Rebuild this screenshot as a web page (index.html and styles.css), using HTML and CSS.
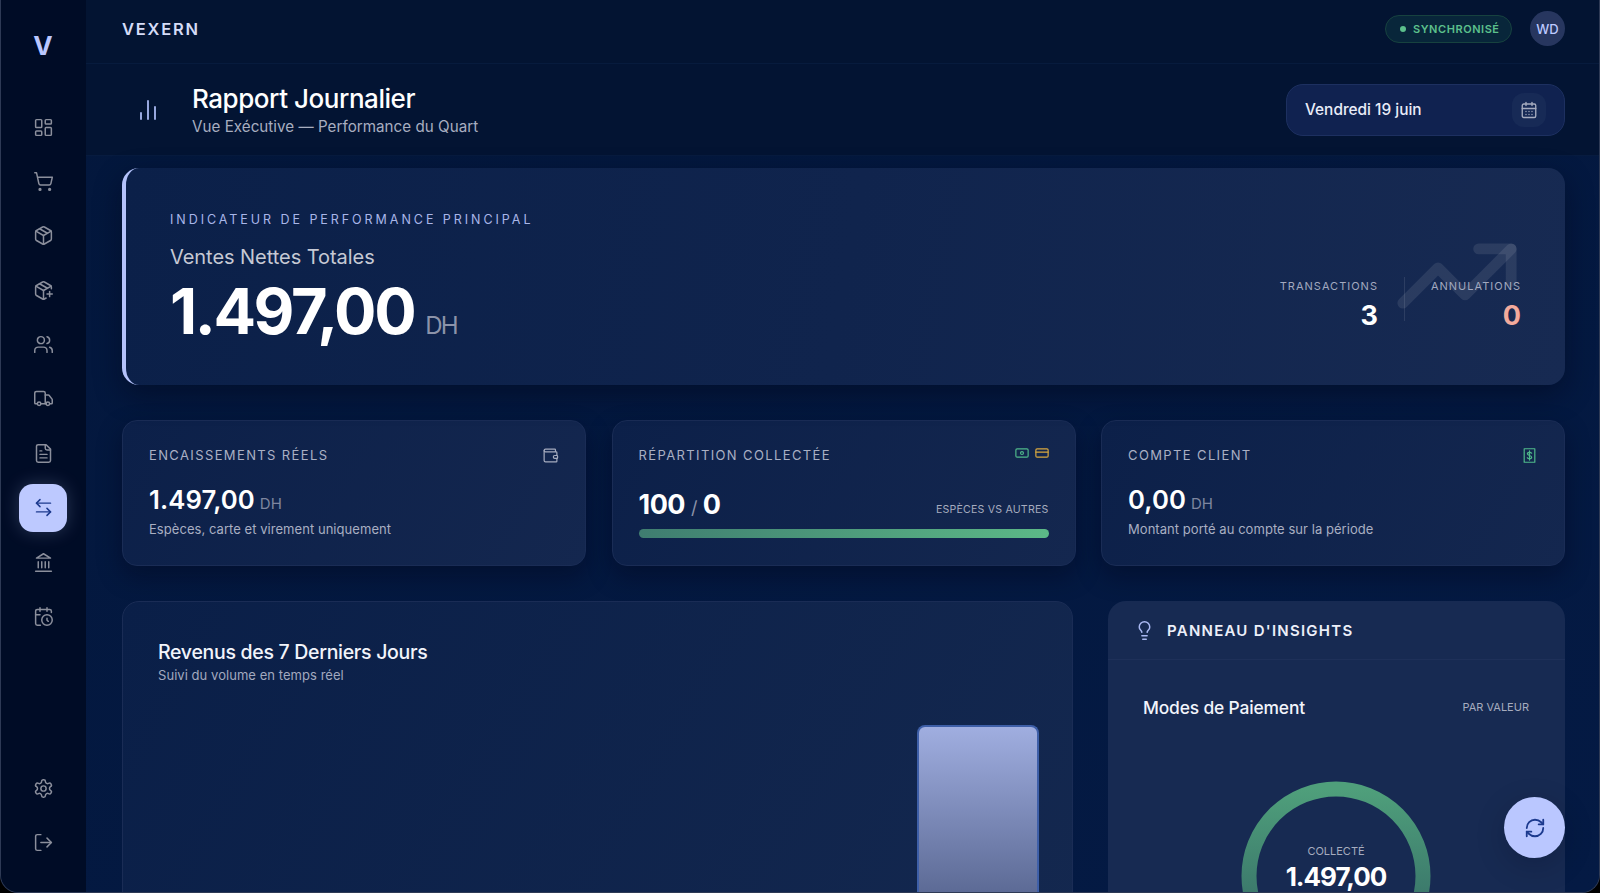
FILE: index.html
```html
<!DOCTYPE html>
<html lang="fr">
<head>
<meta charset="utf-8">
<title>Vexern — Rapport Journalier</title>
<link rel="stylesheet" href="styles.css">
</head>
<body>
<div class="app">
  <aside class="sidebar">
    <div class="logo">V</div>
    <nav class="nav">
      <a class="nav-item"><svg class="ic" viewBox="0 0 24 24"><rect x="3" y="3" width="7" height="9" rx="1"/><rect x="14" y="3" width="7" height="5" rx="1"/><rect x="14" y="12" width="7" height="9" rx="1"/><rect x="3" y="16" width="7" height="5" rx="1"/></svg></a>
      <a class="nav-item"><svg class="ic" viewBox="0 0 24 24"><circle cx="8" cy="21" r="1"/><circle cx="19" cy="21" r="1"/><path d="M2.05 2.05h2l2.66 12.42a2 2 0 0 0 2 1.58h9.78a2 2 0 0 0 1.95-1.57l1.65-7.43H5.12"/></svg></a>
      <a class="nav-item"><svg class="ic" viewBox="0 0 24 24"><path d="M11 21.73a2 2 0 0 0 2 0l7-4A2 2 0 0 0 21 16V8a2 2 0 0 0-1-1.73l-7-4a2 2 0 0 0-2 0l-7 4A2 2 0 0 0 3 8v8a2 2 0 0 0 1 1.73z"/><path d="M12 22V12"/><path d="M3.29 7 12 12l8.71-5"/><path d="m7.5 4.27 9 5.15"/></svg></a>
      <a class="nav-item"><svg class="ic" viewBox="0 0 24 24"><path d="M16 16h6"/><path d="M19 13v6"/><path d="M21 10V8a2 2 0 0 0-1-1.73l-7-4a2 2 0 0 0-2 0l-7 4A2 2 0 0 0 3 8v8a2 2 0 0 0 1 1.73l7 4a2 2 0 0 0 2 0l2-1.14"/><path d="m7.5 4.27 9 5.15"/><path d="M3.29 7 12 12l8.71-5"/><path d="M12 22V12"/></svg></a>
      <a class="nav-item"><svg class="ic" viewBox="0 0 24 24"><path d="M16 21v-2a4 4 0 0 0-4-4H6a4 4 0 0 0-4 4v2"/><circle cx="9" cy="7" r="4"/><path d="M22 21v-2a4 4 0 0 0-3-3.87"/><path d="M16 3.13a4 4 0 0 1 0 7.75"/></svg></a>
      <a class="nav-item"><svg class="ic" viewBox="0 0 24 24"><path d="M14 18V6a2 2 0 0 0-2-2H4a2 2 0 0 0-2 2v11a1 1 0 0 0 1 1h2"/><path d="M15 18H9"/><path d="M19 18h2a1 1 0 0 0 1-1v-3.65a1 1 0 0 0-.22-.624l-3.48-4.35A1 1 0 0 0 17.52 8H14"/><circle cx="17" cy="18" r="2"/><circle cx="7" cy="18" r="2"/></svg></a>
      <a class="nav-item"><svg class="ic" viewBox="0 0 24 24"><path d="M15 2H6a2 2 0 0 0-2 2v16a2 2 0 0 0 2 2h12a2 2 0 0 0 2-2V7Z"/><path d="M14 2v4a2 2 0 0 0 2 2h4"/><path d="M10 9H8"/><path d="M16 13H8"/><path d="M16 17H8"/></svg></a>
      <a class="nav-item active"><svg class="ic" viewBox="0 0 24 24"><path d="M8 3 4 7l4 4"/><path d="M4 7h16"/><path d="m16 21 4-4-4-4"/><path d="M20 17H4"/></svg></a>
      <a class="nav-item"><svg class="ic" viewBox="0 0 24 24"><path d="M3 22h18"/><path d="M6 18v-7"/><path d="M10 18v-7"/><path d="M14 18v-7"/><path d="M18 18v-7"/><path d="M12 2l8 5H4z"/></svg></a>
      <a class="nav-item"><svg class="ic" viewBox="0 0 24 24"><path d="M21 7.5V6a2 2 0 0 0-2-2H5a2 2 0 0 0-2 2v14a2 2 0 0 0 2 2h3.5"/><path d="M16 2v4"/><path d="M8 2v4"/><path d="M3 10h5"/><path d="M17.5 17.5 16 16.3V14"/><circle cx="16" cy="16" r="6"/></svg></a>
    </nav>
    <nav class="nav nav-bottom">
      <a class="nav-item"><svg class="ic" viewBox="0 0 24 24"><path d="M12.22 2h-.44a2 2 0 0 0-2 2v.18a2 2 0 0 1-1 1.73l-.43.25a2 2 0 0 1-2 0l-.15-.08a2 2 0 0 0-2.73.73l-.22.38a2 2 0 0 0 .73 2.73l.15.1a2 2 0 0 1 1 1.72v.51a2 2 0 0 1-1 1.74l-.15.09a2 2 0 0 0-.73 2.73l.22.38a2 2 0 0 0 2.73.73l.15-.08a2 2 0 0 1 2 0l.43.25a2 2 0 0 1 1 1.73V20a2 2 0 0 0 2 2h.44a2 2 0 0 0 2-2v-.18a2 2 0 0 1 1-1.73l.43-.25a2 2 0 0 1 2 0l.15.08a2 2 0 0 0 2.73-.73l.22-.39a2 2 0 0 0-.73-2.73l-.15-.08a2 2 0 0 1-1-1.74v-.5a2 2 0 0 1 1-1.74l.15-.09a2 2 0 0 0 .73-2.73l-.22-.38a2 2 0 0 0-2.73-.73l-.15.08a2 2 0 0 1-2 0l-.43-.25a2 2 0 0 1-1-1.73V4a2 2 0 0 0-2-2z"/><circle cx="12" cy="12" r="3"/></svg></a>
      <a class="nav-item"><svg class="ic" viewBox="0 0 24 24"><path d="M9 21H5a2 2 0 0 1-2-2V5a2 2 0 0 1 2-2h4"/><path d="m16 17 5-5-5-5"/><path d="M21 12H9"/></svg></a>
    </nav>
  </aside>

  <div class="main">
    <header class="topbar">
      <div class="brand">VEXERN</div>
      <div class="top-right">
        <div class="sync"><span class="sync-dot"></span>SYNCHRONISÉ</div>
        <div class="avatar">WD</div>
      </div>
    </header>

    <section class="page-head">
      <svg class="head-ic" viewBox="0 0 24 24"><path d="M5 21v-6"/><path d="M12 21V3"/><path d="M19 21V9"/></svg>
      <div class="head-text">
        <h1>Rapport Journalier</h1>
        <p>Vue Exécutive — Performance du Quart</p>
      </div>
      <div class="date-box">
        <span>Vendredi 19 juin</span>
        <span class="date-ic"><svg class="ic-18" viewBox="0 0 24 24"><path d="M8 2v4"/><path d="M16 2v4"/><rect x="3" y="4" width="18" height="18" rx="2"/><path d="M3 10h18"/><path d="M8 14h.01"/><path d="M12 14h.01"/><path d="M16 14h.01"/><path d="M8 18h.01"/><path d="M12 18h.01"/><path d="M16 18h.01"/></svg></span>
      </div>
    </section>

    <main class="content">
      <section class="hero">
        <svg class="hero-trend" viewBox="0 0 24 24"><path d="M22 7l-8.5 8.5-5-5L2 17"/><path d="M16 7h6v6"/></svg>
        <div class="hero-left">
          <div class="eyebrow">INDICATEUR DE PERFORMANCE PRINCIPAL</div>
          <div class="hero-title">Ventes Nettes Totales</div>
          <div class="hero-value">1.497,00<span class="hero-unit">DH</span></div>
        </div>
        <div class="hero-stats">
          <div class="stat">
            <div class="stat-label">TRANSACTIONS</div>
            <div class="stat-value">3</div>
          </div>
          <div class="stat-sep"></div>
          <div class="stat">
            <div class="stat-label">ANNULATIONS</div>
            <div class="stat-value salmon">0</div>
          </div>
        </div>
      </section>

      <section class="kpis">
        <article class="kpi">
          <div class="kpi-head">
            <span class="kpi-label">ENCAISSEMENTS RÉELS</span>
            <svg class="kpi-ic grey" viewBox="0 0 24 24"><path d="M19 7V4a1 1 0 0 0-1-1H5a2 2 0 0 0 0 4h15a1 1 0 0 1 1 1v4h-3a2 2 0 0 0 0 4h3a1 1 0 0 0 1-1v-2a1 1 0 0 0-1-1"/><path d="M3 5v14a2 2 0 0 0 2 2h15a1 1 0 0 0 1-1v-4"/></svg>
          </div>
          <div class="kpi-value">1.497,00<span class="kpi-unit">DH</span></div>
          <div class="kpi-sub">Espèces, carte et virement uniquement</div>
        </article>
        <article class="kpi">
          <div class="kpi-head">
            <span class="kpi-label">RÉPARTITION COLLECTÉE</span>
            <span class="kpi-icons">
              <svg class="mini green" viewBox="0 0 24 24"><rect x="1.5" y="5" width="21" height="14" rx="2"/><circle cx="12" cy="12" r="2.5"/></svg>
              <svg class="mini amber" viewBox="0 0 24 24"><rect x="1.5" y="5" width="21" height="14" rx="2"/><path d="M1.5 10.5h21"/></svg>
            </span>
          </div>
          <div class="split-row">
            <div class="split-value">100 <span class="split-slash">/</span> 0</div>
            <div class="split-note">ESPÈCES VS AUTRES</div>
          </div>
          <div class="split-bar"></div>
        </article>
        <article class="kpi">
          <div class="kpi-head">
            <span class="kpi-label">COMPTE CLIENT</span>
            <svg class="kpi-ic green" viewBox="0 0 24 24"><rect x="4.5" y="2.5" width="15" height="19" stroke-dasharray="2.2 .5"/><path d="M15 8.8c-.5-.9-1.600-1.300-3-1.300-1.700 0-3 .8-3 2.200 0 3 6 1.600 6 4.600 0 1.400-1.300 2.200-3 2.200-1.500 0-2.600-.5-3.100-1.400"/><path d="M12 5.500v13"/></svg>
          </div>
          <div class="kpi-value">0,00<span class="kpi-unit">DH</span></div>
          <div class="kpi-sub">Montant porté au compte sur la période</div>
        </article>
      </section>

      <section class="lower">
        <article class="chart-card">
          <h2>Revenus des 7 Derniers Jours</h2>
          <p>Suivi du volume en temps réel</p>
          <div class="chart-area"><div class="chart-bar"></div></div>
        </article>
        <article class="insights">
          <header class="insights-head">
            <svg class="bulb" viewBox="0 0 24 24"><path d="M15 14c.2-1 .7-1.700 1.500-2.500 1-.9 1.500-2.200 1.500-3.500A6 6 0 0 0 6 8c0 1 .2 2.200 1.500 3.500.7.7 1.300 1.500 1.500 2.500"/><path d="M9 18h6"/><path d="M10 22h4"/></svg>
            <span>PANNEAU D'INSIGHTS</span>
          </header>
          <div class="insights-body">
            <div class="modes-row">
              <h3>Modes de Paiement</h3>
              <span>PAR VALEUR</span>
            </div>
            <div class="donut">
              <svg class="donut-svg" viewBox="0 0 190 190">
                <defs><linearGradient id="ring" x1="0" y1="0" x2="0" y2="1"><stop offset="0" stop-color="#4f9f7b"/><stop offset=".6" stop-color="#3c7a6c"/></linearGradient></defs>
                <circle cx="95" cy="95" r="87" fill="none" stroke="url(#ring)" stroke-width="15"/>
              </svg>
              <div class="donut-center">
                <div class="donut-label">COLLECTÉ</div>
                <div class="donut-value">1.497,00</div>
              </div>
            </div>
          </div>
        </article>
      </section>
    </main>
  </div>

  <button class="fab" type="button" aria-label="Actualiser"><svg class="fab-ic" viewBox="0 0 24 24"><path d="M3 12a9 9 0 0 1 9-9 9.750 9.750 0 0 1 6.740 2.740L21 8"/><path d="M21 3v5h-5"/><path d="M21 12a9 9 0 0 1-9 9 9.750 9.750 0 0 1-6.740-2.740L3 16"/><path d="M8 16H3v5"/></svg></button>
</div>
</body>
</html>
```
FILE: styles.css
```css
* { box-sizing: border-box; }
html, body { margin: 0; height: 100%; background: #000; overflow: hidden; }
body { font-family: Inter, "Liberation Sans", sans-serif; color: #e9ecf8; }
h1, h2, h3, p { margin: 0; }
svg { fill: none; stroke: currentColor; stroke-width: 2; stroke-linecap: round; stroke-linejoin: round; flex: none; display: block; }

.app {
  position: relative;
  display: flex;
  width: 1600px;
  height: 893px;
  overflow: hidden;
  border: 1px solid #2e3a55;
  border-top: 0;
  border-radius: 0 0 18px 18px;
  background: #031a42;
}

/* Sidebar */
.sidebar {
  width: 85px;
  flex: none;
  display: flex;
  flex-direction: column;
  align-items: center;
  background: #000c26;
  padding: 0 1px 26px 0;
}
.logo {
  height: 103px;
  padding-top: 28px;
  font-size: 26px;
  line-height: 36px;
  font-weight: 700;
  color: #bac7ff;
}
.nav { display: flex; flex-direction: column; gap: 6.4px; }
.nav-bottom { margin-top: auto; gap: 5.6px; }
.nav-item {
  width: 48px;
  height: 48px;
  border-radius: 14px;
  display: flex;
  align-items: center;
  justify-content: center;
  color: #8b8f9c;
}
.nav-item.active {
  background: #bdc9ff;
  color: #1c3a8e;
  box-shadow: 0 0 18px rgba(186, 199, 255, .22);
}
.ic { width: 21px; height: 21px; stroke-width: 1.7; }
.ic-18 { width: 18px; height: 18px; stroke-width: 1.8; }

/* Main column */
.main { flex: 1; min-width: 0; display: flex; flex-direction: column; background: linear-gradient(160deg, #03173c, #041a44); }

.topbar {
  height: 64px;
  flex: none;
  display: flex;
  align-items: center;
  justify-content: space-between;
  padding: 0 34px 6px 36px;
  background: #031432;
  border-bottom: 1px solid #071b3d;
}
.brand { font-size: 16.500px; font-weight: 600; letter-spacing: 1.800px; color: #d5dcf7; }
.top-right { display: flex; align-items: center; gap: 18px; }
.sync {
  height: 28px;
  width: 127px;
  display: flex;
  align-items: center;
  padding-left: 14px;
  gap: 7px;
  border-radius: 14px;
  border: 1px solid #17423f;
  background: #08263a;
  color: #5cc08c;
  font-size: 11px;
  font-weight: 600;
  letter-spacing: .55px;
}
.sync-dot { width: 6px; height: 6px; border-radius: 50%; background: #5cc08c; }
.avatar {
  width: 35px;
  height: 35px;
  border-radius: 50%;
  background: #27365f;
  color: #bdc9ff;
  display: flex;
  align-items: center;
  justify-content: center;
  font-size: 13px;
  font-weight: 500;
}

.page-head {
  height: 92px;
  flex: none;
  display: flex;
  align-items: center;
  padding: 0 34px 0 36px;
  background: #031433;
  border-bottom: 1px solid #071b3f;
}
.head-ic { width: 24px; height: 24px; margin-left: 14px; margin-right: 32px; color: #a9b8f2; stroke-width: 1.8; }
.head-text { flex: 1; padding-top: 5px; }
h1 { font-size: 26px; line-height: 30px; font-weight: 500; color: #fff; letter-spacing: -.45px; margin-top: -1px; }
.head-text p { font-size: 15.200px; line-height: 25px; color: #a8aec0; letter-spacing: .02px; }
.date-box {
  width: 279px;
  height: 52px;
  border-radius: 17px;
  background: #102250;
  border: 1px solid #1d3060;
  display: flex;
  align-items: center;
  justify-content: space-between;
  padding: 0 18px;
  font-size: 15.400px;
  font-weight: 500;
  color: #e9ecf8;
}
.date-ic {
  width: 34px;
  height: 34px;
  border-radius: 12px;
  background: #172a56;
  display: flex;
  align-items: center;
  justify-content: center;
  color: #a6acbf;
}

/* Content */
.content { flex: 1; min-height: 0; padding: 12px 34px 0 36px; display: flex; flex-direction: column; }

.hero {
  position: relative;
  height: 217px;
  flex: none;
  display: flex;
  justify-content: space-between;
  align-items: flex-start;
  border-left: 4px solid #b4c2fb;
  border-radius: 17px;
  background: linear-gradient(100deg, #0b2049, #10244d 50%, #172a52);
  box-shadow: 0 10px 28px rgba(0, 6, 24, .45);
  padding: 0 44px;
}
.hero-trend { position: absolute; right: 43px; top: 43px; width: 130px; height: 130px; color: rgba(255, 255, 255, .09); }
.hero-left { margin-top: 44px; }
.eyebrow { font-size: 12.500px; letter-spacing: 2.950px; color: #a9b6e9; line-height: 16px; font-weight: 400; }
.hero-title { font-size: 20px; line-height: 28px; margin-top: 15px; color: #c6c9d4; letter-spacing: -.05px; }
.hero-value { font-size: 63px; line-height: 70px; height: 70px; font-weight: 700; color: #fff; letter-spacing: -2.400px; margin-top: 5px; }
.hero-unit { font-size: 24px; line-height: 1; font-weight: 400; color: #8c93a9; letter-spacing: -1.800px; margin-left: 11px; }
.hero-stats { position: relative; display: flex; align-items: flex-start; gap: 26px; margin-top: 110px; }
.stat { text-align: right; }
.stat-label { font-size: 11px; letter-spacing: 1px; color: #a2a9bf; line-height: 16px; }
.stat-value { font-size: 27px; line-height: 36px; font-weight: 700; color: #fff; margin-top: 4px; }
.salmon { color: #f3aa9c; }
.stat-sep { width: 1px; height: 44px; margin-top: -1px; background: rgba(255, 255, 255, .1); }

.kpis { display: grid; grid-template-columns: repeat(3, 464px); gap: 25.500px; margin-top: 35px; flex: none; }
.kpi {
  height: 146px;
  border-radius: 15px;
  background: linear-gradient(120deg, #0c2049, #14274f);
  border: 1px solid #1a2c55;
  box-shadow: 0 10px 24px rgba(0, 6, 24, .4);
  padding: 24px 26px 0 26px;
}
.kpi-head { display: flex; align-items: center; justify-content: space-between; height: 20px; }
.kpi-label { font-size: 13px; letter-spacing: 1.380px; color: #aab0c4; }
.kpi-ic { width: 17px; height: 17px; stroke-width: 1.700; }
.grey { color: #a6acbf; }
.green { color: #4fb98a; }
.amber { color: #d9a83f; }
.kpi-icons { display: flex; gap: 6px; margin-top: -4px; }
.mini { width: 14px; height: 14px; stroke-width: 2; }
.kpi-value { margin-top: 20px; font-size: 25.700px; line-height: 30px; height: 30px; font-weight: 600; color: #fff; letter-spacing: .1px; }
.kpi-unit { font-size: 15px; line-height: 1; font-weight: 400; color: #7e869f; margin-left: 5px; letter-spacing: 0; }
.kpi-sub { font-size: 13px; line-height: 20px; color: #a9afc2; margin-top: 4px; letter-spacing: .05px; }
.split-row { display: flex; align-items: flex-end; justify-content: space-between; margin-top: 26px; height: 34px; }
.split-value { font-size: 27px; line-height: 34px; font-weight: 700; color: #fff; letter-spacing: -.5px; }
.split-slash { font-size: 18px; font-weight: 400; color: #8c93a9; }
.split-note { font-size: 10.600px; color: #a6acbf; line-height: 20px; letter-spacing: .2px; margin-bottom: 5px; }
.split-bar { margin-top: 4px; height: 9px; border-radius: 5px; background: linear-gradient(90deg, #3f7d70, #5cb987); }

.lower { display: grid; grid-template-columns: 951px 457px; gap: 35px; margin-top: 35px; flex: none; }
.chart-card {
  height: 400px;
  border-radius: 17px;
  background: linear-gradient(120deg, #0a1f48, #14284f);
  border: 1px solid #1a2c55;
  padding: 36px 33px 0 35px;
}
h2 { font-size: 19.500px; line-height: 28px; font-weight: 500; color: #f2f4fb; letter-spacing: -.3px; }
.chart-card p { font-size: 13px; line-height: 18px; color: #a2a9bf; letter-spacing: .05px; }
.chart-area { display: flex; justify-content: flex-end; margin-top: 41px; }
.chart-bar {
  width: 122px;
  height: 300px;
  border: 2px solid #3e5fa8;
  border-bottom: 0;
  border-radius: 8px 8px 0 0;
  background: linear-gradient(180deg, #a0aee0, #5d6b96 55%);
}

.insights { height: 400px; border-radius: 18px; background: #172a52; }
.insights-head {
  height: 59px;
  display: flex;
  align-items: center;
  gap: 12px;
  padding-left: 26px;
  border-bottom: 1px solid #1e3059;
  font-size: 15px;
  font-weight: 600;
  letter-spacing: 1.250px;
  color: #eceff9;
}
.bulb { width: 21px; height: 21px; color: #a9b8f2; stroke-width: 1.700; }
.insights-body { padding: 0 36px 0 35px; }
.modes-row { display: flex; justify-content: space-between; align-items: center; height: 46px; margin-top: 24px; }
h3 { font-size: 17.400px; font-weight: 500; color: #f2f4fb; letter-spacing: -.15px; }
.modes-row span { font-size: 11px; color: #a6acbf; }
.donut { position: relative; width: 190px; height: 190px; margin: 51px auto 0; }
.donut-svg { width: 190px; height: 190px; }
.donut-center { position: absolute; left: 0; right: 0; top: 62px; text-align: center; }
.donut-label { font-size: 11px; line-height: 16px; color: #a6acbf; }
.donut-value { font-size: 26px; line-height: 32px; font-weight: 700; color: #fff; letter-spacing: -1px; margin-top: 2px; }

.fab {
  position: absolute;
  right: 34px;
  bottom: 34px;
  width: 61px;
  height: 61px;
  border: 0;
  border-radius: 50%;
  background: #bac7ff;
  color: #1c3a8e;
  display: flex;
  align-items: center;
  justify-content: center;
  padding: 0;
  box-shadow: 0 8px 30px rgba(0, 6, 24, .2);
}
.fab-ic { width: 22px; height: 22px; }
```
